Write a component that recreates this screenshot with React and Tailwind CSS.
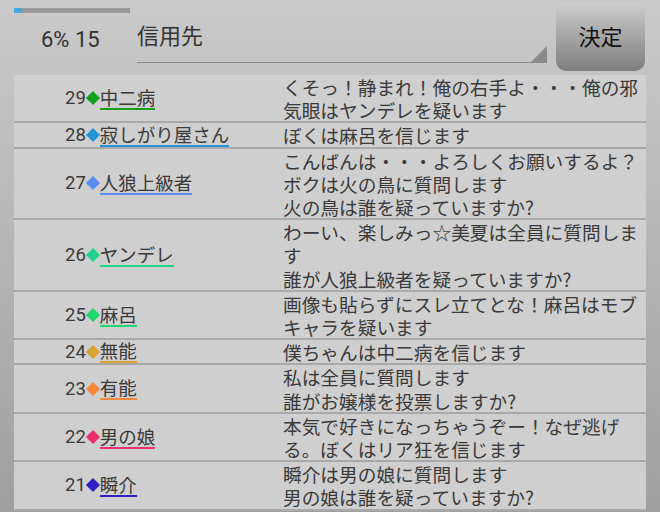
const rows = [
  { no: 29, name: "中二病", color: "#14a01c", msg: "くそっ！静まれ！俺の右手よ・・・俺の邪気眼はヤンデレを疑います" },
  { no: 28, name: "寂しがり屋さん", color: "#2594d4", msg: "ぼくは麻呂を信じます" },
  { no: 27, name: "人狼上級者", color: "#5b8cf2", msg: "こんばんは・・・よろしくお願いするよ？\nボクは火の鳥に質問します\n火の鳥は誰を疑っていますか?" },
  { no: 26, name: "ヤンデレ", color: "#1fd48a", msg: "わーい、楽しみっ☆美夏は全員に質問します\n誰が人狼上級者を疑っていますか?" },
  { no: 25, name: "麻呂", color: "#22d46e", msg: "画像も貼らずにスレ立てとな！麻呂はモブキャラを疑います" },
  { no: 24, name: "無能", color: "#d8a332", msg: "僕ちゃんは中二病を信じます" },
  { no: 23, name: "有能", color: "#f4883c", msg: "私は全員に質問します\n誰がお嬢様を投票しますか?" },
  { no: 22, name: "男の娘", color: "#e92e6c", msg: "本気で好きになっちゃうぞー！なぜ逃げる。ぼくはリア狂を信じます" },
  { no: 21, name: "瞬介", color: "#2f1fc0", msg: "瞬介は男の娘に質問します\n男の娘は誰を疑っていますか?" },
];

const font = { fontFamily: 'Roboto, "Noto Sans CJK JP", sans-serif' };
const jp = { fontFamily: '"Noto Sans CJK JP", sans-serif' };

function Row({ r }) {
  return (
    <div className="grid grid-cols-[269px_1fr] border-b-2 border-[#a9a9a9]">
      <div className="flex items-center pl-[51px] text-[18.5px] leading-[22px] text-[#3a3a3a]">
        <span>{r.no}</span>
        <span
          className="inline-block w-[10px] h-[10px] rotate-45 mx-[2px]"
          style={{ backgroundColor: r.color }}
        />
        <span className="border-b-2 leading-[21px]" style={{ ...jp, borderColor: r.color }}>
          {r.name}
        </span>
      </div>
      <div
        className="pr-[2px] text-[18.7px] leading-[23.2px] text-[#3a3a3a] whitespace-pre-line break-all"
        style={jp}
      >
        {r.msg}
      </div>
    </div>
  );
}

export default function App() {
  return (
    <div
      className="w-[660px] h-[512px] overflow-hidden bg-linear-to-b from-[#cacaca] to-[#9f9f9f]"
      style={font}
    >
      <div className="flex h-[75px] pl-[14px] pr-[15px]">
        <div className="w-[123px] flex flex-col">
          <div className="mt-[8px] w-[116px] h-[5px] bg-[#999999]">
            <div className="w-[8px] h-full bg-[#3fa9e2]" />
          </div>
          <div className="mt-[12px] pl-[27px] text-[22px] leading-[30px] text-[#333333]">6% 15</div>
        </div>
        <div className="relative w-[410px] h-[63px] border-b-[1.5px] border-[#8a8a8a]">
          <div className="pt-[18px] text-[22px] text-[#333333]" style={jp}>信用先</div>
          <div className="absolute right-0 bottom-0 w-0 h-0 border-l-[16px] border-l-transparent border-b-[16px] border-b-[#8a8a8a]" />
        </div>
        <button
          className="ml-[9px] mt-[3px] w-[89px] h-[68px] rounded-[10px] bg-linear-to-b from-[#cdcdcd] to-[#7e7e7e] text-[22px] text-[#111111] flex items-center justify-center pb-[4px]"
          style={jp}
        >
          決定
        </button>
      </div>
      <div className="mx-[14px] bg-[#cfcfcf]">
        {rows.map((r) => (
          <Row key={r.no} r={r} />
        ))}
      </div>
    </div>
  );
}
